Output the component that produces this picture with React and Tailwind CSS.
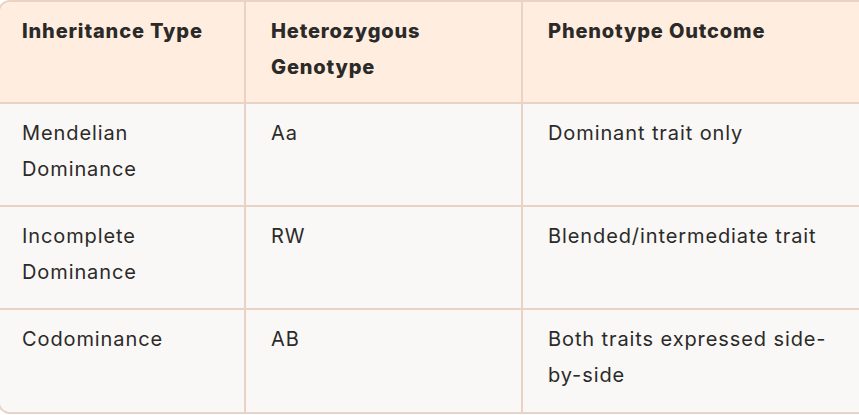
const ROWS = [
  { type: ['Mendelian', 'Dominance'], genotype: 'Aa', outcome: 'Dominant trait only' },
  { type: ['Incomplete', 'Dominance'], genotype: 'RW', outcome: 'Blended/intermediate trait' },
  { type: ['Codominance'], genotype: 'AB', outcome: 'Both traits expressed side-by-side' },
];

export default function App() {
  return (
    <div className="w-[859px] h-[415px] overflow-hidden bg-white" style={{ fontFamily: 'Inter, "Noto Sans", sans-serif' }}>
      <div className="ml-[-2px] w-[900px] rounded-xl border-2 border-[#ead3c5] overflow-hidden">
        <table className="w-full table-fixed border-collapse text-[20px] leading-[36px] tracking-[0.9px] text-[#2b2a29]">
          <colgroup>
            <col className="w-[245px]" />
            <col className="w-[277px]" />
            <col />
          </colgroup>
          <thead className="bg-[#ffeedf]">
            <tr className="h-[101px] align-top">
              <th className="text-left font-extrabold tracking-[0.85px] px-[22px] pt-[11px] pb-[14px] border-r-2 border-[#ead3c5]">Inheritance Type</th>
              <th className="text-left font-extrabold tracking-[0.85px] pl-[25px] pr-6 pt-[11px] pb-[14px] border-r-2 border-[#ead3c5]">
                Heterozygous<br />Genotype
              </th>
              <th className="text-left font-extrabold tracking-[0.85px] pl-[25px] pr-6 pt-[11px] pb-[14px]">Phenotype Outcome</th>
            </tr>
          </thead>
          <tbody className="bg-[#f9f8f6]">
            {ROWS.map((r, i) => (
              <tr key={i} className="h-[103px] align-top border-t-2 border-[#ead3c5]">
                <td className="px-[22px] pt-[11px] pb-[14px] border-r-2 border-[#ead3c5]">
                  {r.type.map((t, j) => <div key={j}>{t}</div>)}
                </td>
                <td className="pl-[25px] pr-6 pt-[11px] pb-[14px] border-r-2 border-[#ead3c5]">{r.genotype}</td>
                <td className="pl-[25px] pr-6 pt-[11px] pb-[14px]">
                  <div className="w-[285px]">{r.outcome}</div>
                </td>
              </tr>
            ))}
          </tbody>
        </table>
      </div>
    </div>
  );
}
